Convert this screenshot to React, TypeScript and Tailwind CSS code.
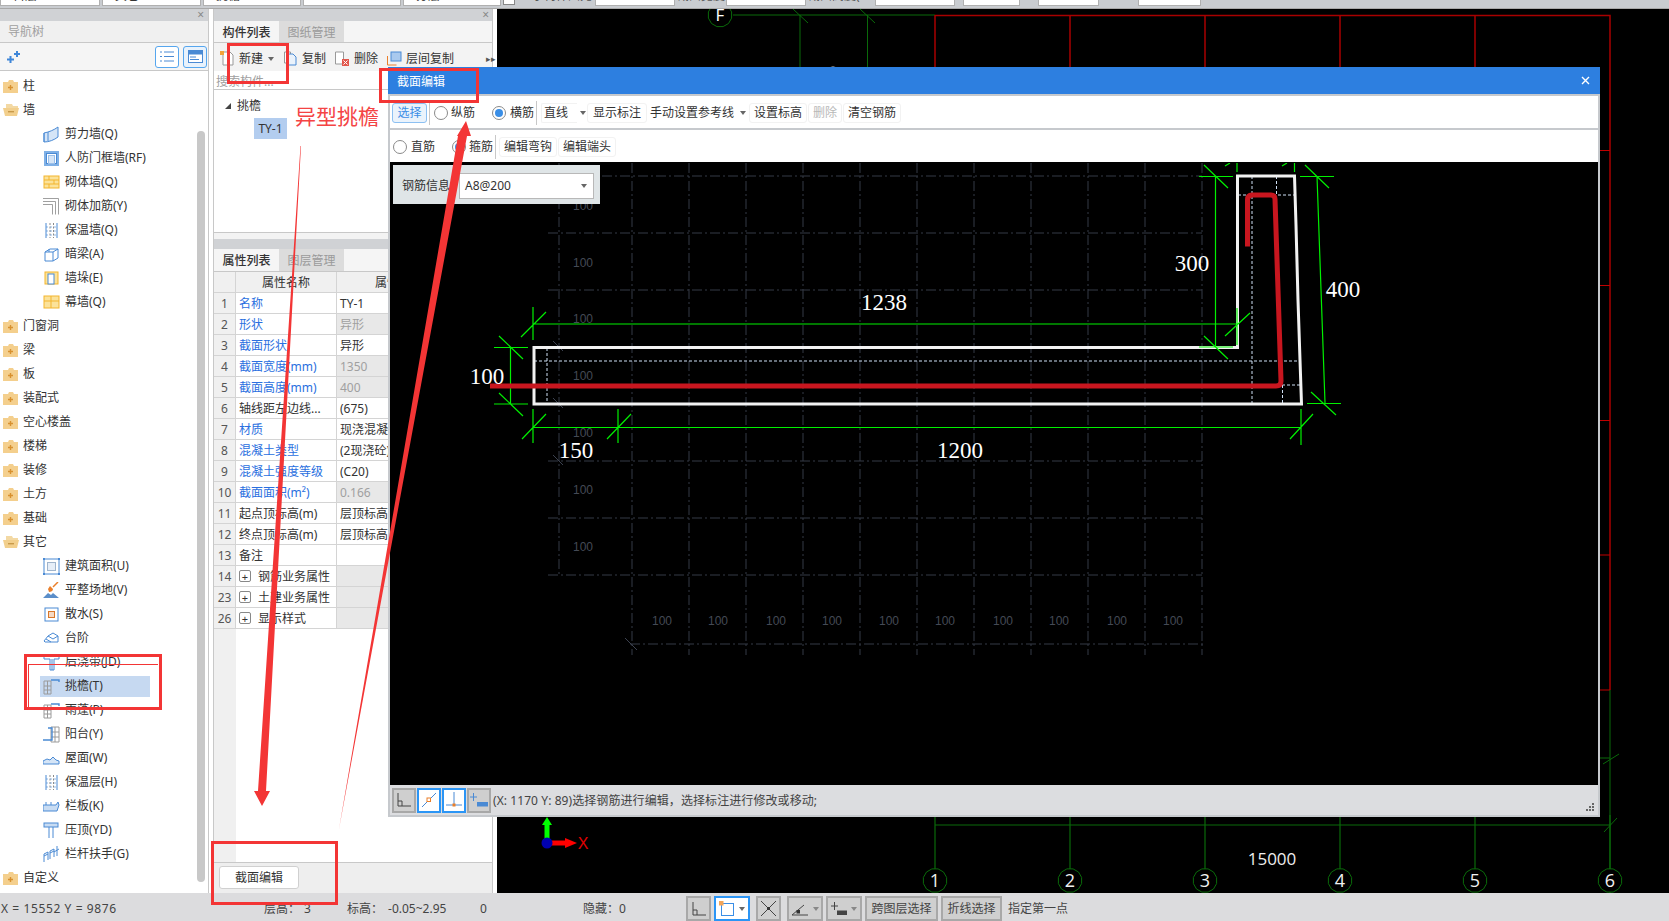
const BLUE = "#4a8ad4";
const GREEN = "#00f000";
const DARKGREEN = "#0a6a0a";
const DARKRED = "#a80000";

type TreeRow = { label: string; icon?: string; folder?: "open" | "closed" | "special"; selected?: boolean };

const treeRows: TreeRow[] = [
  { label: "柱", folder: "closed" },
  { label: "墙", folder: "open" },
  { label: "剪力墙(Q)", icon: "shear" },
  { label: "人防门框墙(RF)", icon: "frame" },
  { label: "砌体墙(Q)", icon: "brick" },
  { label: "砌体加筋(Y)", icon: "rebar" },
  { label: "保温墙(Q)", icon: "insul" },
  { label: "暗梁(A)", icon: "beam" },
  { label: "墙垛(E)", icon: "pier" },
  { label: "幕墙(Q)", icon: "curtain" },
  { label: "门窗洞", folder: "closed" },
  { label: "梁", folder: "closed" },
  { label: "板", folder: "closed" },
  { label: "装配式", folder: "closed" },
  { label: "空心楼盖", folder: "closed" },
  { label: "楼梯", folder: "closed" },
  { label: "装修", folder: "closed" },
  { label: "土方", folder: "closed" },
  { label: "基础", folder: "closed" },
  { label: "其它", folder: "open" },
  { label: "建筑面积(U)", icon: "area" },
  { label: "平整场地(V)", icon: "site" },
  { label: "散水(S)", icon: "apron" },
  { label: "台阶", icon: "steps" },
  { label: "后浇带(JD)", icon: "band" },
  { label: "挑檐(T)", icon: "eave", selected: true },
  { label: "雨蓬(P)", icon: "eave" },
  { label: "阳台(Y)", icon: "balcony" },
  { label: "屋面(W)", icon: "roof" },
  { label: "保温层(H)", icon: "insul" },
  { label: "栏板(K)", icon: "panel" },
  { label: "压顶(YD)", icon: "coping" },
  { label: "栏杆扶手(G)", icon: "rail" },
  { label: "自定义", folder: "special" },
];

type PropRow = { no: number; name: string; value?: string; link?: boolean; muted?: boolean; group?: boolean };

const propRows: PropRow[] = [
  { no: 1, name: "名称", value: "TY-1", link: true },
  { no: 2, name: "形状", value: "异形", link: true, muted: true },
  { no: 3, name: "截面形状", value: "异形", link: true },
  { no: 4, name: "截面宽度(mm)", value: "1350", link: true, muted: true },
  { no: 5, name: "截面高度(mm)", value: "400", link: true, muted: true },
  { no: 6, name: "轴线距左边线...", value: "(675)" },
  { no: 7, name: "材质", value: "现浇混凝土", link: true },
  { no: 8, name: "混凝土类型", value: "(2现浇砼)", link: true },
  { no: 9, name: "混凝土强度等级", value: "(C20)", link: true },
  { no: 10, name: "截面面积(m²)", value: "0.166", link: true, muted: true },
  { no: 11, name: "起点顶标高(m)", value: "层顶标高" },
  { no: 12, name: "终点顶标高(m)", value: "层顶标高" },
  { no: 13, name: "备注", value: "" },
  { no: 14, name: "钢筋业务属性", group: true },
  { no: 23, name: "土建业务属性", group: true },
  { no: 26, name: "显示样式", group: true },
];

function FolderIcon({ kind }: { kind: "open" | "closed" | "special" }) {
  if (kind === "open") {
    return (
      <svg width="17" height="14" viewBox="0 0 17 14">
        <path d="M3 1h6l1 2h5v2H3z" fill="#f3d9a4" />
        <path d="M0 5h16l-2 8H2z" fill="#f2cf8c" />
        <rect x="5" y="8" width="6" height="1.4" fill="#c89a4a" />
      </svg>
    );
  }
  return (
    <svg width="15" height="14" viewBox="0 0 15 14">
      <path d="M0 3h5l1-2h4l1 2h4v11H0z" fill="#f4cf8d" />
      <path d="M5 8.5h5M7.5 6v5" stroke="#d8912f" strokeWidth="1.4" />
    </svg>
  );
}

function TreeIcon({ name }: { name: string }) {
  const s = { fill: "none", stroke: BLUE, strokeWidth: 1 };
  const inner = (() => {
    switch (name) {
      case "shear":
        return <path d="M1 7c5-1 10-3 14-6v10c-4 3-9 5-14 5zM1 7v9M5 6v9" {...s} fill="#d5e5f7" />;
      case "frame":
        return (
          <>
            <rect x="1" y="1" width="15" height="15" fill="#7fb0e6" />
            <rect x="3.5" y="3.5" width="10" height="10" fill="#fff" stroke={BLUE} />
            <rect x="5.5" y="5.5" width="6" height="8" fill="#d5e5f7" stroke="#9cc0ea" />
          </>
        );
      case "brick":
      case "curtain":
        return (
          <>
            <rect x="1" y="2" width="15" height="12" fill="#fbe29a" stroke="#f3b52e" />
            <path d={name === "brick" ? "M1 6h15M1 10h15M6 2v4M11 6v4M6 10v4" : "M1 7h15M8 2v12"} stroke="#f3b52e" fill="none" />
          </>
        );
      case "rebar":
        return <path d="M0 0.5h15.5v16M0 3.5h12.5v13M0 6.5h9.5v10" fill="none" stroke="#888" strokeWidth="0.8" />;
      case "insul":
        return (
          <>
            <path d="M3 1v15M14 1v15" fill="none" stroke={BLUE} />
            <path d="M7 1v15M10.5 1v15" fill="none" stroke="#8a8a8a" strokeDasharray="2 1.5" />
            <path d="M3 5h11M3 9h11M3 13h11" fill="none" stroke={BLUE} strokeWidth="0.6" strokeDasharray="2 2" />
          </>
        );
      case "beam":
        return <path d="M2 6l5-3h8v9l-5 3H2zM2 6h8v9M10 6l5-3M6 3v3" {...s} />;
      case "pier":
        return (
          <>
            <rect x="2" y="2" width="13" height="12" fill="#fbe29a" stroke="#f3b52e" />
            <rect x="5" y="4" width="6" height="10" fill="#fff" stroke={BLUE} />
          </>
        );
      case "area":
        return (
          <>
            <rect x="1" y="1" width="15" height="15" {...s} />
            <rect x="4.5" y="4.5" width="8" height="8" fill="#e6eef8" stroke="#9fb4cc" />
            <path d="M0 1h2M15 1h2M0 16h2M15 16h2" stroke={BLUE} strokeWidth="2" />
          </>
        );
      case "site":
        return (
          <>
            <path d="M0 16l5-5 3 2 2-2 6 5z" fill="#5b8ec9" />
            <path d="M6 10c2 0 4-1 4-3L7 4 5 7z" fill="#ea7f2a" />
            <path d="M10 5l5-5" stroke="#ea7f2a" strokeWidth="1.5" />
          </>
        );
      case "apron":
        return (
          <>
            <rect x="2" y="2" width="13" height="13" {...s} />
            <rect x="5.5" y="5.5" width="6" height="6" fill="#f5d9c4" stroke="#d9772a" />
          </>
        );
      case "steps":
        return <path d="M1 11l4-5 5-3 5 3v6H2zM5 6l5 3 5-3M3 9l5 3" {...s} />;
      case "band":
        return <path d="M1 2h15v3h-5v11H7V5H1zM9 5v11" {...s} />;
      case "eave":
        return (
          <>
            <path d="M1 3h7v13H1zM1 8h7M1 12h7M4.5 3v13" fill="none" stroke="#9a9a9a" />
            <path d="M8 2h8v2" fill="none" stroke={BLUE} strokeWidth="1.4" />
          </>
        );
      case "balcony":
        return (
          <>
            <path d="M8 1h8v15H8zM8 6h8M8 11h8M12 1v15" fill="none" stroke="#9a9a9a" />
            <path d="M5 2h4v12H0" fill="none" stroke={BLUE} strokeWidth="1.4" />
          </>
        );
      case "roof":
        return <path d="M0 14h16v-3l-3-1-3-3-3 3-3-1-4 2z" fill="#d5e5f7" stroke={BLUE} />;
      case "panel":
        return <path d="M0 7h13l2-3 1 3-2 6H0zM3 7V4M8 7V4" fill="#c8dcf3" stroke={BLUE} />;
      case "coping":
        return (
          <>
            <rect x="1" y="1" width="14" height="4" fill="#c8dcf3" stroke={BLUE} />
            <path d="M6 5v11M10 5v11" {...s} />
          </>
        );
      default:
        return <path d="M1 16V8l4-2v8M1 10l4-2M7 13V5l4-2v8M7 7l4-2M11 6l5-3M14 0v10" {...s} />;
    }
  })();
  return (
    <svg width="17" height="17" viewBox="0 0 17 17">
      {inner}
    </svg>
  );
}

function Caret({ color = "#666" }: { color?: string }) {
  return <span className="inline-block h-0 w-0 border-x-[3.5px] border-t-[4px] border-x-transparent" style={{ borderTopColor: color }} />;
}

function NavPanel() {
  return (
    <div className="flex h-full w-[209px] shrink-0 flex-col border-r border-[#c8c8c8] bg-white">
      <div className="flex h-[12px] shrink-0 items-center justify-end bg-[#d0d2d5] pr-[4px] text-[12px] leading-none text-[#888]">×</div>
      <div className="flex h-[22px] shrink-0 items-center border-b border-[#c8c8c8] bg-[#f0f0f0] pl-[8px] text-[#a0a0a0]">导航树</div>
      <div className="flex h-[28px] shrink-0 items-center border-b border-[#c8c8c8] bg-[#f5f5f5] pl-[7px]">
        <svg width="13" height="12" viewBox="0 0 13 12">
          <path d="M0 8.5h7M3.5 5v7M7 3h6M10 0v6" stroke="#3f86d8" strokeWidth="2" fill="none" />
        </svg>
        <div className="ml-[135px] flex h-[22px] w-[24px] items-center justify-center rounded-[3px] border border-[#56a6ee] bg-white">
          <svg width="14" height="13" viewBox="0 0 14 13">
            <path d="M0 2h2M4 2h10M0 6.5h2M4 6.5h10M0 11h2M4 11h10" stroke={BLUE} fill="none" />
          </svg>
        </div>
        <div className="ml-[4px] flex h-[22px] w-[24px] items-center justify-center rounded-[3px] border border-[#56a6ee] bg-[#e8f2fc]">
          <svg width="15" height="13" viewBox="0 0 15 13">
            <rect x="0.5" y="0.5" width="14" height="12" fill="#fff" stroke={BLUE} />
            <rect x="0.5" y="0.5" width="14" height="4" fill={BLUE} />
            <path d="M2 7h6M2 9.5h9" stroke={BLUE} />
          </svg>
        </div>
      </div>
      <div className="flex min-h-0 flex-1 pt-[3px]">
        <div className="min-w-0 flex-1">
          {treeRows.map((row) => (
            <div key={row.label} className="flex h-[24px] items-center">
              {row.folder ? (
                <div className="flex w-full items-center">
                  <span className="flex w-[23px] justify-start pl-[3px]">
                    <FolderIcon kind={row.folder} />
                  </span>
                  <span>{row.label}</span>
                </div>
              ) : (
                <div className={`ml-[40px] flex h-[21px] w-[110px] items-center pl-[3px] ${row.selected ? "bg-[#c6d9f1]" : ""}`}>
                  <TreeIcon name={row.icon ?? ""} />
                  <span className="ml-[5px] whitespace-nowrap">{row.label}</span>
                </div>
              )}
            </div>
          ))}
        </div>
        <div className="mr-[3px] mt-[57px] mb-[11px] w-[8px] rounded-[4px] bg-[#c8c8c8]" />
      </div>
    </div>
  );
}

function PanelTabs({ active, other, tall }: { active: string; other: string; tall?: boolean }) {
  return (
    <div className={`flex shrink-0 border-b border-[#c8c8c8] bg-[#f5f5f5] ${tall ? "h-[23px]" : "h-[22px]"}`}>
      <div className="flex w-[65px] items-center justify-center pt-[2px] font-medium">{active}</div>
      <div className="flex w-[65px] items-center justify-center bg-[#dcdcdc] pt-[2px] text-[#9a9a9a]">{other}</div>
    </div>
  );
}

function ComponentPanel() {
  return (
    <div className="ml-[4px] flex h-full w-[280px] shrink-0 flex-col border-x border-[#c8c8c8] bg-white">
      <div className="flex h-[12px] shrink-0 items-center justify-end bg-[#d0d2d5] pr-[3px] text-[12px] leading-none text-[#888]">×</div>
      <PanelTabs active="构件列表" other="图纸管理" />
      <div className="flex h-[28px] shrink-0 items-center whitespace-nowrap bg-[#f3f3f3] pl-[6px] pt-[3px]">
        <svg className="shrink-0" width="15" height="15" viewBox="0 0 15 15">
          <path d="M3 1h7l3 3v10H3z" fill="#fff" stroke="#999" />
          <path d="M0 0h4v4H0z" fill="#f2a33a" />
        </svg>
        <span className="ml-[4px]">新建</span>
        <span className="ml-[5px] flex">
          <Caret />
        </span>
        <svg className="ml-[10px] shrink-0" width="13" height="15" viewBox="0 0 13 15">
          <path d="M0.5 1h6v11h-6z" fill="#fff" stroke="#999" />
          <path d="M4 3h5l3 3v8H4z" fill="#eaf2fb" stroke={BLUE} />
        </svg>
        <span className="ml-[5px]">复制</span>
        <svg className="ml-[9px] shrink-0" width="14" height="15" viewBox="0 0 14 15">
          <path d="M0.5 1h8v12h-8z" fill="#fff" stroke="#999" />
          <rect x="7" y="8" width="7" height="7" fill="#e2574c" />
          <path d="M8.5 9.5l4 4M12.5 9.5l-4 4" stroke="#fff" />
        </svg>
        <span className="ml-[5px]">删除</span>
        <svg className="ml-[9px] shrink-0" width="15" height="15" viewBox="0 0 15 15">
          <path d="M0.5 5v9h9" fill="none" stroke="#ea7f2a" />
          <rect x="4" y="1" width="10" height="9" fill="#a9c9ee" stroke={BLUE} />
        </svg>
        <span className="ml-[4px]">层间复制</span>
        <span className="ml-[32px] text-[9px] text-[#555]">▸▸</span>
      </div>
      <div className="flex h-[19px] shrink-0 items-center border-b border-[#c8c8c8] pl-[2px] pt-[3px] text-[#a0a0a0]">搜索构件...</div>
      <div className="h-[143px] shrink-0 border-b border-[#c8c8c8] pl-[11px] pt-[6px]">
        <div className="flex h-[19px] items-center">
          <span className="h-0 w-0 border-b-[6px] border-l-[6px] border-b-[#444] border-l-transparent" />
          <span className="ml-[6px]">挑檐</span>
        </div>
        <div className="ml-[29px] mt-[3px] flex h-[21px] w-[33px] items-center justify-center bg-[#b3cdef]">TY-1</div>
      </div>
      <div className="h-[6px] shrink-0 bg-[#f3f3f3]" />
      <div className="h-[10px] shrink-0 bg-[#d0d2d5]" />
      <PanelTabs active="属性列表" other="图层管理" tall />
      <div className="flex min-h-0 flex-1 flex-col overflow-hidden">
        <div className="grid h-[21px] shrink-0 grid-cols-[22px_101px_1fr] border-b border-[#d4d4d4] bg-[#f0f0f0]">
          <div className="border-r border-[#d4d4d4]" />
          <div className="flex items-center justify-center border-r border-[#d4d4d4] pt-[2px]">属性名称</div>
          <div className="flex items-center pl-[38px] pt-[2px]">属性值</div>
        </div>
        {propRows.map((row) => (
          <div key={row.no} className="grid h-[21px] shrink-0 grid-cols-[22px_101px_1fr] border-b border-[#d4d4d4]">
            <div className="flex items-center justify-center border-r border-[#d4d4d4] bg-[#f0f0f0] pt-[2px] text-[#555]">{row.no}</div>
            <div className={`flex items-center whitespace-nowrap border-r border-[#d4d4d4] pl-[3px] pt-[2px] ${row.link ? "text-[#2a6fe0]" : ""}`}>
              {row.group && (
                <span className="mr-[7px] -mt-[2px] flex h-[12px] w-[12px] items-center justify-center rounded-[2px] border border-[#888] text-[11px] leading-none">+</span>
              )}
              {row.name}
            </div>
            <div className={`flex items-center overflow-hidden whitespace-nowrap pl-[3px] pt-[2px] ${row.muted || row.group ? "bg-[#e8e8e8]" : ""} ${row.muted ? "text-[#a0a0a0]" : ""}`}>{row.value}</div>
          </div>
        ))}
        <div className="min-h-0 flex-1">
          <div className="h-full w-[22px] bg-[#f0f0f0]" />
        </div>
      </div>
      <div className="flex h-[31px] shrink-0 items-start border-t border-[#c8c8c8] bg-[#eeeeee] pl-[5px] pt-[3px]">
        <div className="flex h-[23px] w-[80px] items-center justify-center rounded-[3px] border border-[#d0d0d0] bg-white">截面编辑</div>
      </div>
    </div>
  );
}

function ngon(cx: number, cy: number, r: number) {
  const pts: string[] = [];
  for (let i = 0; i < 12; i++) {
    const a = (i * Math.PI) / 6 + 0.26;
    pts.push(`${(cx + r * Math.cos(a)).toFixed(1)},${(cy + r * Math.sin(a)).toFixed(1)}`);
  }
  return pts.join(" ");
}

function MainCanvas() {
  const axisX = [935, 1070, 1205, 1340, 1475, 1610];
  return (
    <div className="ml-[4px] min-w-0 flex-1 bg-black">
      <svg className="block h-full w-full" viewBox="497 9 1172 884">
        <path d="M733 15H935M800 15V70M867.5 15V70M793 9l15 14M860 9l15 14" stroke={DARKGREEN} fill="none" />
        <polygon points={ngon(720, 15, 12)} fill="none" stroke={DARKGREEN} />
        <text x="720" y="21" textAnchor="middle" fontSize="17" fill="#fff" fontFamily="Open Sans, sans-serif">F</text>
        <circle cx="833" cy="78" r="11" fill="none" stroke="#fff" />
        <path d="M935 15.5H1610V690M935 15V70M1070 15V70M1205 15V70M1340 15V70M1475 15V70" stroke={DARKRED} fill="none" strokeWidth="1.5" />
        <path d="M1600 150.5H1610M1600 285.5H1610M1600 420.5H1610M1600 555H1610M1600 690H1610" stroke="#c00000" />
        <path d="M1610 690V893M1600 758H1610M1603 764l16-10" stroke={DARKGREEN} fill="none" />
        <path d="M935 825H1610M1604 832l13-14" stroke={DARKGREEN} fill="none" />
        {axisX.map((x, i) => (
          <g key={x}>
            <path d={`M${x} 815V869`} stroke={DARKGREEN} strokeWidth="1.2" />
            <polygon points={ngon(x, 880.5, 12)} fill="#000" stroke={DARKGREEN} />
            <text x={x} y="887" textAnchor="middle" fontSize="18" fill="#f0f0f0" fontFamily="Open Sans, sans-serif">
              {i + 1}
            </text>
          </g>
        ))}
        <text x="1272" y="865" textAnchor="middle" fontSize="17" fill="#eee" fontFamily="Open Sans, sans-serif">15000</text>
        <path d="M547 843V825" stroke="#00ff00" strokeWidth="5" />
        <path d="M547 817l5 8h-10z" fill="#00ff00" />
        <path d="M547 843H565" stroke="#ff0000" strokeWidth="5" />
        <path d="M577 843l-12-5v10z" fill="#ff0000" />
        <circle cx="547" cy="843" r="5.5" fill="#0000b0" />
        <text x="583" y="849" textAnchor="middle" fontSize="16" fill="#e00000" fontFamily="Liberation Sans, sans-serif">X</text>
      </svg>
    </div>
  );
}

function SectionDrawing() {
  const vLines = [559, 632, 689, 746, 803, 860, 917, 974, 1031, 1088, 1145, 1202];
  const hLines = [176, 233, 290, 347, 404, 461, 518, 575];
  const sideLabels = [206, 263, 319, 376, 433, 490, 547];
  const bottomLabels = [662, 718, 776, 832, 889, 945, 1003, 1059, 1117, 1173];
  const dims: [string, number, number][] = [
    ["1238", 884, 310],
    ["300", 1192, 271],
    ["400", 1343, 297],
    ["100", 487, 384],
    ["150", 576, 458],
    ["1200", 960, 458],
  ];
  return (
    <svg className="block h-full w-full" viewBox="390 163 1208 622">
      <g stroke="#353a46" fill="none" strokeDasharray="10 3 2 3">
        {vLines.map((x, i) => (
          <path key={x} d={`M${x} 163V${i === 0 ? 575 : 655}`} />
        ))}
        {hLines.map((y) => (
          <path key={y} d={`M548 ${y}H1202`} />
        ))}
        <path d="M630 644H1203" />
      </g>
      <path d="M553 341l10 10M553 398l10 10M553 455l10 10M625 638l12 12" stroke="#3c4250" fill="none" />
      {sideLabels.map((y) => (
        <text key={y} x="583" y={y + 4} textAnchor="middle" fontSize="12" fill="#444a55" fontFamily="Liberation Sans, sans-serif">100</text>
      ))}
      {bottomLabels.map((x) => (
        <text key={x} x={x} y="625" textAnchor="middle" fontSize="12" fill="#444a55" fontFamily="Liberation Sans, sans-serif">100</text>
      ))}
      <path
        d="M534 361H1300M547 348V404M1252 176V404M1276.5 176V195M1238 195H1296M1282.5 385V404M1282 385H1300"
        stroke="#cfe0f5"
        strokeDasharray="3 2"
        fill="none"
      />
      <path
        d="M534 347.5H1237.5V176H1294.5L1296 225L1298 300L1300 360L1301.5 404H534Z"
        fill="none"
        stroke="#f2f2f2"
        strokeWidth="3"
      />
      <g stroke={GREEN} fill="none" strokeWidth="1.2">
        <path d="M533 324H1237M533 307V340M521 337l25-25M1237 308V345M1225 336l25-23" />
        <path d="M1215.5 176V347M1199 176.5H1233M1199 347H1233M1204 165l24 23M1204 336l24 23" />
        <path d="M1317 176L1325 403M1300 176.5H1334M1307 403.5H1341M1305 165l24 23M1311 392l25 23" />
        <path d="M533 427.5H1301M533 409V443M522 439l24-25M618 409V443M607 439l24-25M1301 409V445M1290 439l23-25" />
        <path d="M510.5 347.5V404M494 347.5H528M494 404H528M499 336l24 23M499 393l24 23" />
        <path d="M1237 163V172M1294.5 163V172M1225 166l5-3M1282 166l5-3" />
      </g>
      <path
        d="M490 386H1276Q1281 386 1281 381L1275 199Q1275 195 1271 195H1252Q1247.5 195 1247.5 200V246.5"
        fill="none"
        stroke="#c8161f"
        strokeWidth="5"
      />
      {dims.map(([label, x, y]) => (
        <text key={label + x} x={x} y={y} textAnchor="middle" fontSize="23" fill="#fff" fontFamily="Liberation Serif, serif">
          {label}
        </text>
      ))}
    </svg>
  );
}

function ToolText({ children, w, muted }: { children: string; w: number; muted?: boolean }) {
  return (
    <div className={`flex h-[20px] items-center justify-center rounded-[3px] border border-[#f2f2f2] ${muted ? "text-[#b8b8b8]" : ""}`} style={{ width: w }}>
      {children}
    </div>
  );
}

function Radio({ checked }: { checked?: boolean }) {
  return (
    <span className="flex h-[14px] w-[14px] shrink-0 items-center justify-center rounded-full border border-[#8a8a8a] bg-white">
      {checked && <span className="h-[8px] w-[8px] rounded-full bg-[#3a8ee6]" />}
    </span>
  );
}

function SnapIcon({ kind }: { kind: string }) {
  if (kind === "ortho") {
    return (
      <svg width="14" height="14" viewBox="0 0 14 14">
        <path d="M1 0V13H14M1 8H5V13" fill="none" stroke="#444" />
      </svg>
    );
  }
  if (kind === "line") {
    return (
      <svg width="16" height="16" viewBox="0 0 16 16">
        <path d="M1 15L15 1" stroke={BLUE} />
        <rect x="6" y="6" width="3.5" height="3.5" fill="#fff" stroke="#ea7f2a" />
      </svg>
    );
  }
  if (kind === "perp") {
    return (
      <svg width="16" height="16" viewBox="0 0 16 16">
        <path d="M0 13H16M8 0V13" stroke={BLUE} fill="none" />
        <rect x="6.5" y="11.5" width="3" height="3" fill="#ea7f2a" />
      </svg>
    );
  }
  return (
    <svg width="18" height="15" viewBox="0 0 18 15">
      <path d="M0 4H7M3.5 0V8" stroke={BLUE} fill="none" />
      <rect x="7" y="9" width="11" height="4.5" fill={BLUE} />
    </svg>
  );
}

function Dialog() {
  return (
    <div className="absolute left-[388px] top-[67px] flex h-[750px] w-[1212px] flex-col bg-[#c6c9cd]">
      <div className="flex h-[27px] shrink-0 items-center justify-between bg-[#2d7fe0] pl-[9px] pr-[10px] pt-[2px] text-white">
        <span>截面编辑</span>
        <svg className="-mt-[2px]" width="9" height="9" viewBox="0 0 9 9">
          <path d="M1 1l7 7M8 1l-7 7" stroke="#fff" strokeWidth="1.4" />
        </svg>
      </div>
      <div className="flex min-h-0 flex-1 flex-col pl-[2px] pr-[2px] pt-[2px]">
        <div className="flex h-[32px] shrink-0 items-center bg-white pt-[2px]">
          <div className="ml-[2px] flex h-[20px] w-[35px] items-center justify-center rounded-[3px] border border-[#8cc0f2] bg-[#eaf3fc] text-[#3a8ee6]">选择</div>
          <span className="ml-[2px] h-[24px] w-px bg-[#c8c8c8]" />
          <span className="ml-[4px]"><Radio /></span>
          <span className="ml-[3px]">纵筋</span>
          <span className="ml-[17px]"><Radio checked /></span>
          <span className="ml-[4px]">横筋</span>
          <span className="ml-[2px] h-[24px] w-px bg-[#c8c8c8]" />
          <div className="ml-[4px] flex h-[20px] w-[36px] items-center rounded-l-[2px] border-y border-l border-[#f2f2f2] pl-[2px]">直线</div>
          <span className="ml-[3px] flex"><Caret /></span>
          <span className="ml-[1px]"><ToolText w={60}>显示标注</ToolText></span>
          <span className="ml-[3px] w-[84px] whitespace-nowrap">手动设置参考线</span>
          <span className="ml-[6px] flex"><Caret /></span>
          <span className="ml-[3px]"><ToolText w={58}>设置标高</ToolText></span>
          <span className="ml-[1px]"><ToolText w={34} muted>删除</ToolText></span>
          <span className="ml-[1px]"><ToolText w={58}>清空钢筋</ToolText></span>
        </div>
        <div className="h-[2px] shrink-0" />
        <div className="flex h-[32px] shrink-0 items-center bg-white pt-[2px]">
          <span className="ml-[3px]"><Radio /></span>
          <span className="ml-[4px]">直筋</span>
          <span className="ml-[17px]"><Radio checked /></span>
          <span className="ml-[3px]">箍筋</span>
          <span className="ml-[2px] h-[24px] w-px bg-[#c8c8c8]" />
          <span className="ml-[3px]"><ToolText w={58}>编辑弯钩</ToolText></span>
          <span className="ml-[1px]"><ToolText w={58}>编辑端头</ToolText></span>
        </div>
        <div className="relative min-h-0 flex-1 bg-black pt-px">
          <SectionDrawing />
          <div className="absolute left-[3px] top-[3px] flex h-[39px] w-[207px] items-center bg-[#dfe5e7] pl-[9px] pt-[2px]">
            <span className="w-[57px]">钢筋信息:</span>
            <div className="flex h-[26px] w-[135px] items-center justify-between border border-[#b8b8b8] bg-white pl-[5px] pr-[6px]">
              <span>A8@200</span>
              <Caret />
            </div>
          </div>
        </div>
        <div className="flex h-[30px] shrink-0 items-center bg-[#dcdde0] pl-[2px]">
          {["ortho", "line", "perp", "plus"].map((kind, i) => (
            <div
              key={kind}
              className={`mr-px flex h-[25px] w-[24px] items-center justify-center border-2 ${i === 1 || i === 2 ? "border-[#2b95f5] bg-white" : "border-[#a8a8a8] bg-[#cfcfcf]"}`}
            >
              <SnapIcon kind={kind} />
            </div>
          ))}
          <span className="ml-[1px] whitespace-nowrap pt-[2px] tracking-[0.08px] text-[#444]">(X: 1170 Y: 89)选择钢筋进行编辑，选择标注进行修改或移动;</span>
          <span className="ml-auto mr-[4px] mt-[14px] grid grid-cols-3 gap-px">
            <i className="h-[2px] w-[2px]" />
            <i className="h-[2px] w-[2px]" />
            <i className="h-[2px] w-[2px] bg-[#666]" />
            <i className="h-[2px] w-[2px]" />
            <i className="h-[2px] w-[2px] bg-[#666]" />
            <i className="h-[2px] w-[2px] bg-[#666]" />
            <i className="h-[2px] w-[2px] bg-[#666]" />
            <i className="h-[2px] w-[2px] bg-[#666]" />
            <i className="h-[2px] w-[2px] bg-[#666]" />
          </span>
        </div>
        <div className="h-[2px] shrink-0" />
      </div>
    </div>
  );
}

function TopField({ w, ml, text }: { w: number; ml: number; text?: string }) {
  return (
    <div className="h-[6px] shrink-0 overflow-hidden border-x border-b border-[#b0b0b0] bg-white pl-[12px]" style={{ width: w, marginLeft: ml }}>
      {text && <div className="-mt-[10px] whitespace-nowrap">{text}</div>}
    </div>
  );
}

function TopLabel({ w, text }: { w: number; text: string }) {
  return (
    <div className="h-[6px] shrink-0 overflow-hidden pl-[2px] text-[#555]" style={{ width: w }}>
      <div className="-mt-[10px] whitespace-nowrap">{text}</div>
    </div>
  );
}

function TopBar() {
  return (
    <div className="flex h-[9px] shrink-0 items-start overflow-hidden border-b border-[#a8a8a8] bg-[#c9ccd0]">
      <TopField w={100} ml={0} text="首层" />
      <TopField w={99} ml={2} text="其它" />
      <TopField w={98} ml={2} text="挑檐" />
      <TopField w={98} ml={2} />
      <TopField w={98} ml={2} text="分层" />
      <div className="ml-[2px] h-[5px] w-[12px] shrink-0 border-x border-b border-[#888] bg-white" />
      <div className="w-[3px] shrink-0" />
      <TopLabel w={74} text="显示构件图元" />
      <TopField w={80} ml={3} />
      <TopLabel w={51} text="截面宽度" />
      <TopField w={80} ml={0} />
      <TopLabel w={69} text="截面高度(mm)" />
      <TopField w={80} ml={0} />
      <TopField w={57} ml={8} text="TY-1" />
      <TopField w={61} ml={18} />
      <TopField w={63} ml={39} />
    </div>
  );
}

function StatusBtn({ children, w, active }: { children: React.ReactNode; w: number; active?: boolean }) {
  return (
    <div
      className={`flex h-[25px] shrink-0 items-center justify-center border-2 ${active ? "border-[#2b95f5] bg-white" : "border-[#a8a8a8] bg-[#cfcfcf]"}`}
      style={{ width: w }}
    >
      {children}
    </div>
  );
}

function StatusBar() {
  return (
    <div className="flex h-[28px] shrink-0 items-center whitespace-nowrap bg-[#dcdcde] pt-[3px] text-[#444]">
      <span className="ml-[1px] w-[263px] tracking-[0.6px]">X = 15552 Y = 9876</span>
      <span className="flex w-[83px]">
        <span>层高：</span>
        <span className="ml-[4px]">3</span>
      </span>
      <span className="flex w-[133px]">
        <span>标高：</span>
        <span className="ml-[5px]">-0.05~2.95</span>
      </span>
      <span className="w-[103px]">0</span>
      <span className="w-[103px]">隐藏：0</span>
      <StatusBtn w={25}><SnapIcon kind="ortho" /></StatusBtn>
      <span className="ml-[3px]" />
      <StatusBtn w={36} active>
        <span className="flex items-center gap-[5px]">
          <svg width="15" height="15" viewBox="0 0 15 15">
            <rect x="2.5" y="2.5" width="12" height="12" fill="none" stroke="#3a8ee6" />
            <rect x="0" y="0" width="4.5" height="4.5" fill="#f2a55a" />
          </svg>
          <Caret />
        </span>
      </StatusBtn>
      <span className="ml-[6px]" />
      <StatusBtn w={25}>
        <svg width="17" height="17" viewBox="0 0 17 17">
          <path d="M1 1l15 15M16 1L1 16" stroke="#444" fill="none" />
          <rect x="7" y="7" width="3" height="3" fill="#333" />
        </svg>
      </StatusBtn>
      <span className="ml-[6px]" />
      <StatusBtn w={36}>
        <span className="flex items-center gap-[5px]">
          <svg width="16" height="14" viewBox="0 0 16 14">
            <path d="M0 13H16M0 13L12 3" stroke="#444" fill="none" />
            <rect x="4.5" y="8" width="3.5" height="3.5" fill="#333" />
          </svg>
          <Caret color="#888" />
        </span>
      </StatusBtn>
      <span className="ml-[3px]" />
      <StatusBtn w={36}>
        <span className="flex items-center gap-[4px]">
          <svg width="16" height="14" viewBox="0 0 16 14">
            <path d="M0 4H7M3.5 0V8" stroke="#444" fill="none" />
            <rect x="6" y="8.5" width="10" height="4.5" fill="#444" />
          </svg>
          <Caret color="#888" />
        </span>
      </StatusBtn>
      <span className="ml-[3px]" />
      <StatusBtn w={73}>跨图层选择</StatusBtn>
      <span className="ml-[3px]" />
      <StatusBtn w={61}>折线选择</StatusBtn>
      <span className="ml-[6px]">指定第一点</span>
    </div>
  );
}

function Annotations() {
  const box = "pointer-events-none absolute border-[3px] border-[#f33535]";
  return (
    <>
      <svg className="pointer-events-none absolute inset-0" width="1669" height="921" viewBox="0 0 1669 921">
        <path d="M300.5 146L301 146L266 791H270L262 806L254 791H258Z" fill="#f33535" />
        <path d="M339 829L458 136H457L466 121L471 136H467Z" fill="#f33535" />
      </svg>
      <div className={`${box} left-[227px] top-[43px] h-[41px] w-[62px]`} />
      <div className={`${box} left-[379px] top-[68px] h-[35px] w-[100px]`} />
      <div className={`${box} left-[24px] top-[654px] h-[56px] w-[138px]`} />
      <div className="pointer-events-none absolute left-[28px] top-[664px] h-[44px] w-[130px] border-l border-t border-[#f33535]" />
      <div className={`${box} left-[211px] top-[841px] h-[64px] w-[127px]`} />
      <div className="pointer-events-none absolute left-[295px] top-[102px] text-[21px] leading-[28px] text-[#f44444]">异型挑檐</div>
    </>
  );
}

export default function App() {
  return (
    <div className="relative flex h-[921px] w-[1669px] flex-col overflow-hidden bg-white font-['Noto_Sans','Noto_Sans_CJK_SC',sans-serif] text-[12px] leading-none text-[#333]">
      <TopBar />
      <div className="flex min-h-0 flex-1">
        <NavPanel />
        <ComponentPanel />
        <MainCanvas />
      </div>
      <StatusBar />
      <Dialog />
      <Annotations />
    </div>
  );
}
